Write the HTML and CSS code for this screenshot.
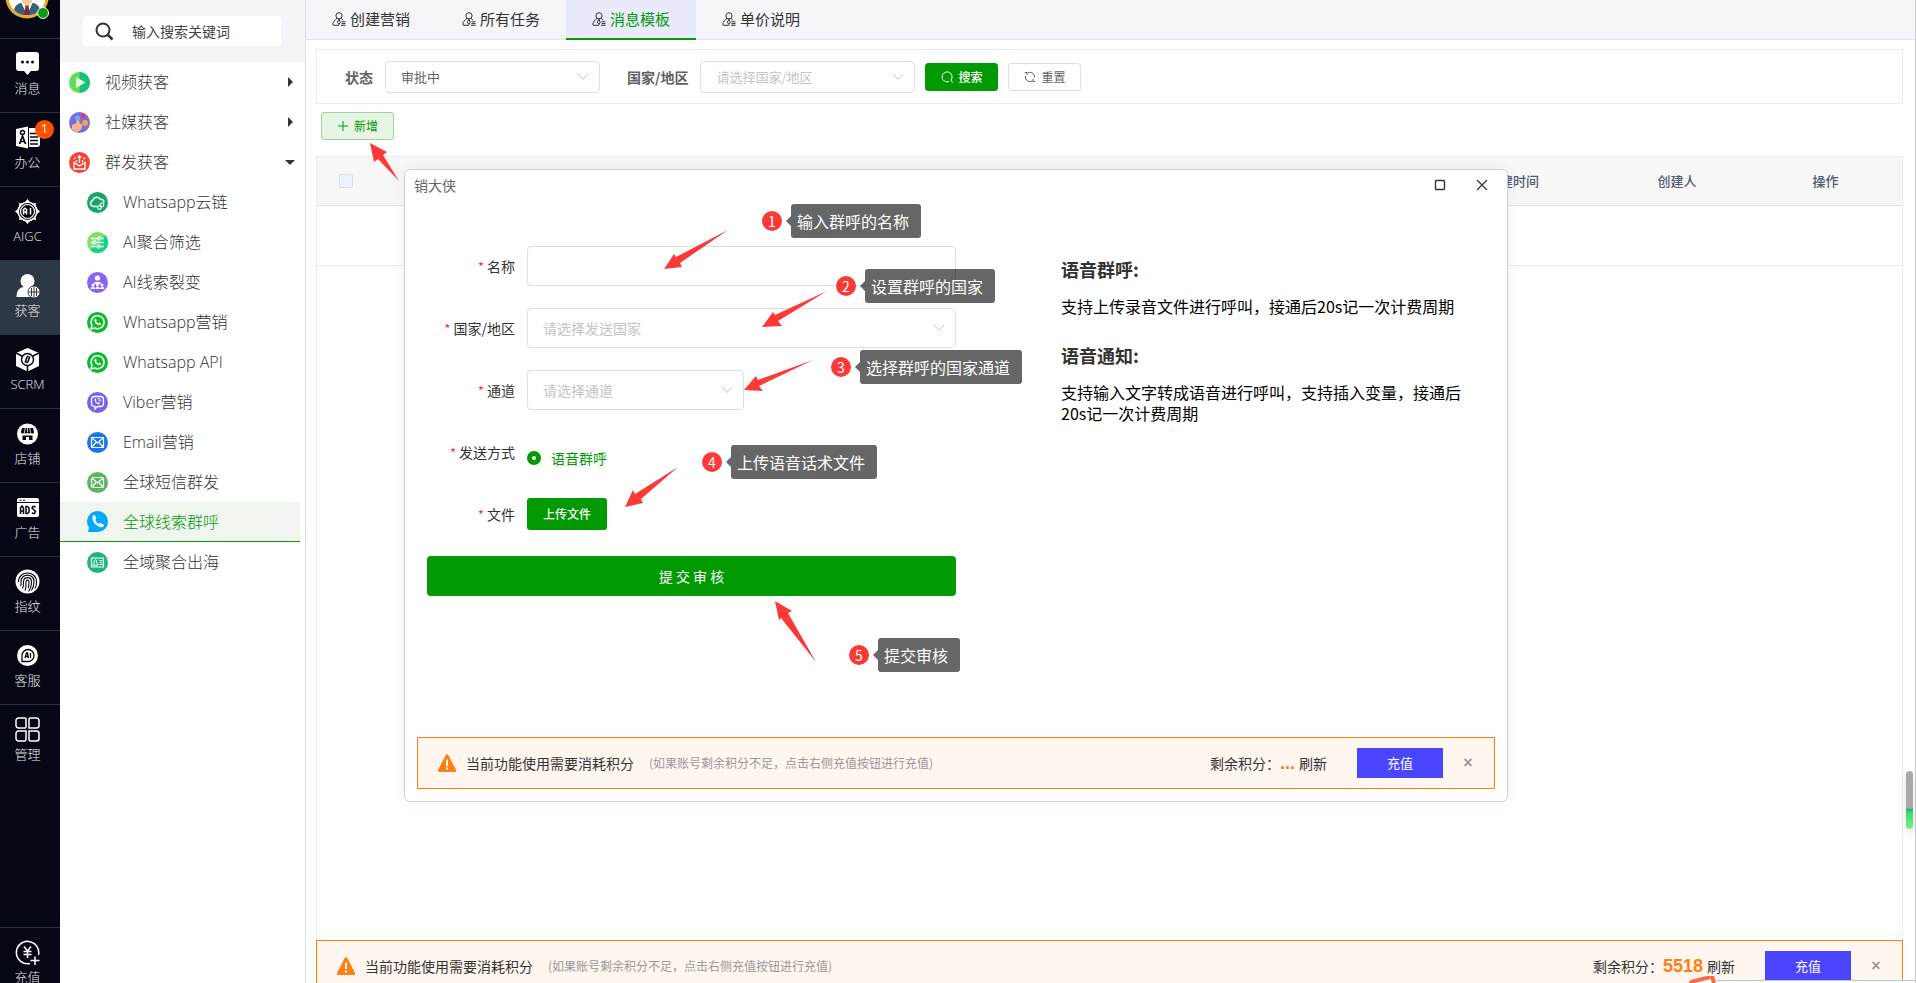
FILE: index.html
```html
<!DOCTYPE html>
<html lang="zh-CN">
<head>
<meta charset="utf-8">
<title>销大侠</title>
<link rel="stylesheet" href="styles.css">
</head>
<body>
<svg class="defs" aria-hidden="true">
  <symbol id="i-tab" viewBox="0 0 14 14"><g fill="none" stroke="currentColor" stroke-width="1"><circle cx="7" cy="3.8" r="3.1"/><path d="M5 6.3C3 7.8 1.2 9.6.8 12.2c-.1.8.3 1.1 1 1.1h5M9 6.3c.9.6 1.6 1.2 2.2 2"/><path d="M7 7l-1.6 3.2L7 12.6l1.2-2.4L7 7M9.5 9.8h4M9.5 11.6h4M9 13.3h4.5"/></g></symbol>
  <symbol id="i-chev" viewBox="0 0 12 8"><path d="M1 1l5 5.4L11 1" fill="none" stroke="currentColor" stroke-width="1"/></symbol>
  <symbol id="i-wa" viewBox="0 0 21 21"><circle cx="10.500" cy="10.500" r="10.500" fill="#0bbd2c"/><path d="M4 17l1-3.4A6.5 6.5 0 1 1 7.6 16z" fill="none" stroke="#fff" stroke-width="1.5"/><path d="M8.1 7c.4-.4.8-.3 1 .1l.5 1.2-.5.9c.5 1.1 1.3 1.8 2.4 2.2l.8-.8 1.6.8c.2.8-.5 1.6-1.4 1.7-2.8 0-5.600-3.100-5.100-5.200z" fill="#fff"/></symbol>
  <symbol id="i-warn" viewBox="0 0 18 18"><path d="M7.700 1a1.500 1.500 0 0 1 2.600 0l7.500 14.500A1.600 1.600 0 0 1 16.500 18h-15A1.600 1.600 0 0 1 .2 15.500z" fill="#ff8011"/><path d="M9 5.500v6.500M9 13.600v2" stroke="#fff" stroke-width="2"/></symbol>
</svg>

<div class="app">
  <nav class="rail" aria-label="主导航">
    <div class="rail-top">
      <div class="avatar">
        <svg viewBox="0 0 44 44" width="44" height="44"><circle cx="22" cy="22" r="21.500" fill="#e8ab2c"/><circle cx="22" cy="22" r="18.500" fill="#fff"/><path d="M9 35c1-6 7-8 13-8s12 2 13 8c-6 7-20 7-26 0z" fill="#34617b"/><path d="M16 27h12l-6 13z" fill="#fff"/><path d="M20.500 30h3l1.200 10h-5.400z" fill="#8c2434"/><path d="M17 22h10v5l-5 4-5-4z" fill="#f6c79b"/></svg>
        <span class="online"></span>
      </div>
    </div>
    <a class="rail-item" href="#"><svg viewBox="0 0 25 25"><path d="M4 1h17a3 3 0 0 1 3 3v13a3 3 0 0 1-3 3h-5l-3.500 4L9 20H4a3 3 0 0 1-3-3V4a3 3 0 0 1 3-3z" fill="#fff"/><g fill="#050714"><circle cx="7.500" cy="11" r="1.500"/><circle cx="12.500" cy="11" r="1.500"/><circle cx="17.500" cy="11" r="1.500"/></g></svg><span>消息</span></a>
    <a class="rail-item" href="#"><svg viewBox="0 0 25 25"><path d="M1 4l12-2.500v22L1 21z" fill="#fff"/><path d="M14 3h8a3 3 0 0 1 3 3v13a3 3 0 0 1-3 3h-8z" fill="#fff"/><path d="M15 8.500h8M15 12h8M15 15.500h8M15 19h8" stroke="#050714" stroke-width="1.500"/><circle cx="7.500" cy="7.500" r="2" fill="none" stroke="#050714" stroke-width="1.500"/><path d="M4.500 19l3-8 3 8M5.500 16.500h4" fill="none" stroke="#050714" stroke-width="1.700"/></svg><span>办公</span><b class="badge">1</b></a>
    <a class="rail-item" href="#"><svg viewBox="0 0 25 25"><circle cx="12.500" cy="12.500" r="9.300" fill="none" stroke="#fff" stroke-width="1.600"/><circle cx="12.500" cy="12.500" r="7" fill="none" stroke="#fff" stroke-width="1.200"/><path d="M12.500 0l2.500 3h-5zM12.500 25l2.500-3h-5zM0 12.500l3-2.500v5zM25 12.500l-3-2.500v5zM4 4l3.500.5-3 3zM21 4l-3.500.5 3 3zM4 21l3.500-.5-3-3zM21 21l-3.500-.5 3-3z" fill="#fff"/><path d="M8.500 15.500v-5l1.500-1.300 1.500 1.300v5M8.500 13h3M15.500 9v6.500" fill="none" stroke="#fff" stroke-width="1.500"/></svg><span>AIGC</span></a>
    <a class="rail-item on" href="#"><svg viewBox="0 0 25 25"><circle cx="12.500" cy="8" r="7" fill="#fff"/><path d="M1.500 24c0-6 2.500-9 6.500-10h7v10z" fill="#fff"/><circle cx="19" cy="19" r="6" fill="#fff" stroke="#2c3845" stroke-width="1"/><path d="M19 14v10M14 19h10M16.500 15v8M21.500 15v8" stroke="#2c3845" stroke-width="1"/></svg><span>获客</span></a>
    <a class="rail-item" href="#"><svg viewBox="0 0 25 25"><path d="M12.500 1L24 6v13l-11.500 5.500L1 19V6z" fill="#fff"/><circle cx="12.500" cy="12.500" r="6" fill="#fff" stroke="#050714" stroke-width="1.500"/><path d="M1 6l6 3M24 6l-6 3M12.500 18.500V25M13.500 9c-3 1-1.500 4-3.500 6.500M15 9.500c-2 2.500-.5 5-3.500 6.500" fill="none" stroke="#050714" stroke-width="1.600"/></svg><span>SCRM</span></a>
    <a class="rail-item" href="#"><svg viewBox="0 0 25 25"><circle cx="12.500" cy="13" r="10.500" fill="#fff"/><path d="M7 7h11l1 4c0 2-3 2-3.300 0-.3 2-3 2-3.200 0-.2 2-3 2-3.200 0-.3 2-3.300 2-3.300 0zM7.500 14.500h10V19h-3.500v-3h-3v3H7.500z" fill="#050714"/><path d="M10.300 7l-.8 4.500M14.700 7l.8 4.500M12.500 7v4" stroke="#fff" stroke-width=".8"/></svg><span>店铺</span></a>
    <a class="rail-item" href="#"><svg viewBox="0 0 25 25"><rect x="2" y="3" width="22" height="19" rx="2" fill="#fff"/><path d="M2 7.500h22M4.500 5.300h2M8 5.300h2" stroke="#050714" stroke-width="1"/><path d="M5.500 19v-6l1.500-2 1.500 2v6M5.500 16h3M11 11.500v7h1.500l1.500-1.500v-4l-1.500-1.500zM20.500 12.500l-1-1H18l-1 1.500 3.500 3.500-1 2H18l-1-1" fill="none" stroke="#050714" stroke-width="1.500"/></svg><span>广告</span></a>
    <a class="rail-item" href="#"><svg viewBox="0 0 25 25"><circle cx="12.500" cy="12.500" r="12" fill="#fff"/><g fill="none" stroke="#050714" stroke-width="1.100"><path d="M3.500 13c0-12 18-12 18 0 0 3-.5 5-1.500 6.500M5.500 17c1-1.500.5-3 .5-4.500 0-8.500 13-8.500 13 0 0 4-.8 6.500-2.500 9M7.500 19.500c1.500-3 .8-5 1-7 .5-5.300 8-5.300 8 .5 0 3.500-1 7-3 9.500M10 21.500c1.500-3 .8-6 1-8.500.2-2.500 3-2.500 3 0 0 3 0 4-.8 6"/></g></svg><span>指纹</span></a>
    <a class="rail-item" href="#"><svg viewBox="0 0 25 25"><circle cx="12.500" cy="12.500" r="10.500" fill="#fff"/><path d="M7 18.500v-6a6 6 0 1 1 6 6z" fill="none" stroke="#050714" stroke-width="1.300"/><path d="M10 15l1.500-5h1l1 5M10.500 13.500h2.500M15.500 10v5" fill="none" stroke="#050714" stroke-width="1.300"/></svg><span>客服</span></a>
    <a class="rail-item last" href="#"><svg viewBox="0 0 25 25"><g fill="none" stroke="#fff" stroke-width="1.500"><path d="M3.500 1H10a1 1 0 0 1 1 1v8a1 1 0 0 1-1 1H3.500A2.500 2.500 0 0 1 1 8.500v-5A2.500 2.500 0 0 1 3.500 1zM15 1h6.500A2.500 2.500 0 0 1 24 3.500v5a2.500 2.500 0 0 1-2.500 2.500H14V2a1 1 0 0 1 1-1zM3.500 14H11v8.500a1.500 1.500 0 0 1-1.500 1.500h-6A2.500 2.500 0 0 1 1 21.500v-5A2.500 2.500 0 0 1 3.500 14zM14 14h7.500a2.500 2.500 0 0 1 2.500 2.500v5a2.500 2.500 0 0 1-2.500 2.500h-6a1.500 1.500 0 0 1-1.500-1.500z"/></g></svg><span>管理</span></a>
    <a class="rail-item foot" href="#"><svg viewBox="0 0 25 25"><g fill="none" stroke="#fff" stroke-width="1.500"><path d="M15 23.500A11.200 11.200 0 1 1 23.500 15M20 16.500V25M15.500 20.500h9"/><path d="M9 6.500l3.500 4.500L16 6.500M8.500 11.500h8M8.500 14.500h8M12.500 11v7"/></g></svg><span>充值</span></a>
  </nav>

  <aside class="side">
    <div class="search-wrap">
      <label class="search"><svg viewBox="0 0 19 19" width="19" height="19"><circle cx="8" cy="8" r="6.500" fill="none" stroke="#333" stroke-width="2"/><path d="M12.500 12.500l5 5" stroke="#333" stroke-width="2.500"/></svg><input type="text" aria-label="搜索" placeholder="输入搜索关键词"></label>
    </div>
    <ul class="menu">
      <li><a href="#"><svg class="mi" viewBox="0 0 21 21"><circle cx="10.500" cy="10.500" r="10.500" fill="#63dd55"/><path d="M10.500 0a10.500 10.500 0 0 1 0 21z" fill="#17c37b"/><path d="M7 5v11l9.500-5.500z" fill="#e4f6e6"/></svg><span>视频获客</span><i class="caret"></i></a></li>
      <li><a href="#"><svg class="mi" viewBox="0 0 21 21"><circle cx="10.500" cy="10.500" r="10.500" fill="#8069dd"/><path d="M3 13l4.500-2V5.500l2 .2 1 5.300 3 2-1.500 4.500L9 20c-3-.5-5-2-6-3z" fill="#f8b68c"/><circle cx="8.500" cy="6" r="2.500" fill="#54b6f5"/><path d="M12 2h4v4h-4z" fill="#e33b52"/><circle cx="16" cy="11" r="3" fill="#f0a63b"/></svg><span>社媒获客</span><i class="caret"></i></a></li>
      <li><a href="#"><svg class="mi" viewBox="0 0 21 21"><circle cx="10.500" cy="10.500" r="10.500" fill="#f44336"/><path d="M5 9.500V17h11V9.500M5.500 10.500l5 3.500 5-3.500M7.500 10V8M13.500 10V8M10.500 11V4M8.800 5.500l1.700-1.700 1.700 1.700M5 7l1.500-1.500M16 7l-1.500-1.500" fill="none" stroke="#fff" stroke-width="1.300"/></svg><span>群发获客</span><i class="caret down"></i></a></li>
      <li class="sub"><a href="#"><svg class="mi" viewBox="0 0 21 21"><circle cx="10.500" cy="10.500" r="10.500" fill="#14a768"/><path d="M10 14.500H6.500a3.200 3.200 0 0 1-.5-6.300c.8-3.500 5.800-4.200 7.300-.9 2.200-.1 3.600 1.400 3.700 3.200" fill="none" stroke="#fff" stroke-width="1.500"/><g fill="none" stroke="#fff" stroke-width="1.200"><circle cx="15" cy="12.800" r="1.800"/><circle cx="12.500" cy="15.500" r="1.800"/></g></svg><span>Whatsapp云链</span></a></li>
      <li class="sub"><a href="#"><svg class="mi" viewBox="0 0 21 21"><circle cx="10.500" cy="10.500" r="10.500" fill="#7de267"/><path d="M18 3a10.500 10.500 0 0 1-15 15z" fill="#0ad97e"/><g stroke="#fff" stroke-width="1.300" fill="#3edb77"><path d="M4 6.500h13M4 10.500h13M4 14.500h13"/><circle cx="12.500" cy="6.500" r="1.500"/><circle cx="7.500" cy="10.500" r="1.500"/><circle cx="11.500" cy="14.500" r="1.500"/></g></svg><span>AI聚合筛选</span></a></li>
      <li class="sub"><a href="#"><svg class="mi" viewBox="0 0 21 21"><circle cx="10.500" cy="10.500" r="10.500" fill="#8763f6"/><g fill="#fff"><circle cx="10.500" cy="6" r="2.600"/><path d="M8 10h5l1.500 2h-8z"/><circle cx="6" cy="13" r="1.500"/><circle cx="10.500" cy="13" r="1.500"/><circle cx="15" cy="13" r="1.500"/><path d="M3.500 17c0-3 4.500-3 4.500 0zM8.300 17c0-3 4.500-3 4.500 0zM13 17c0-3 4.500-3 4.500 0z"/></g></svg><span>AI线索裂变</span></a></li>
      <li class="sub"><a href="#"><svg class="mi"><use href="#i-wa"/></svg><span>Whatsapp营销</span></a></li>
      <li class="sub"><a href="#"><svg class="mi"><use href="#i-wa"/></svg><span>Whatsapp API</span></a></li>
      <li class="sub"><a href="#"><svg class="mi" viewBox="0 0 21 21"><circle cx="10.500" cy="10.500" r="10.500" fill="#7b60ef"/><path d="M7.500 4.500h6c2 0 3 1 3 3v4c0 2-1 3-3 3h-3L8 17v-2.500c-2.500 0-3.500-1-3.500-3v-4c0-2 1-3 3-3z" fill="none" stroke="#fff" stroke-width="1.300"/><path d="M7.700 7c1-1 1.300.2 1.500 1-.8 1 .8 2.800 2 2.800 1-.7 1.700.3 1.700 1-1 1.500-5.700-1-5.200-4.800z" fill="#fff"/><path d="M11 6.500c1.800 0 2.800 1.200 2.800 3M11 8c.8 0 1.200.5 1.200 1.200" fill="none" stroke="#fff" stroke-width=".9"/></svg><span>Viber营销</span></a></li>
      <li class="sub"><a href="#"><svg class="mi" viewBox="0 0 21 21"><circle cx="10.500" cy="10.500" r="10.500" fill="#1a76f0"/><path d="M4.500 5.500h12v10h-12zM4.500 5.500l6 5.500 6-5.500M4.500 15.500l4.500-5M16.500 15.500l-4.500-5" fill="none" stroke="#fff" stroke-width="1.200"/></svg><span>Email营销</span></a></li>
      <li class="sub"><a href="#"><svg class="mi" viewBox="0 0 21 21"><circle cx="10.500" cy="10.500" r="10.500" fill="#5cb860"/><path d="M6.500 5.500h8a2 2 0 0 1 2 2v6a2 2 0 0 1-2 2h-8a2 2 0 0 1-2-2v-6a2 2 0 0 1 2-2zM5 6l5.500 5L16 6M5 15l4-4.500M16 15l-4-4.500" fill="none" stroke="#fff" stroke-width="1.200"/></svg><span>全球短信群发</span></a></li>
      <li class="sub on"><a href="#"><svg class="mi" viewBox="0 0 21 21"><path d="M10.500 0a10.500 10.500 0 1 1 0 21H1l1-4.500A10.500 10.500 0 0 1 10.500 0z" fill="#00a8fb"/><path d="M6 4.500l1.500-.7 2 3.500-1.300 1.500c.5 1.800 2 3.300 3.800 4.200l1.500-1.300 3.500 2.300-.7 1.700C12 18.500 3 10 6 4.500z" fill="#fff"/></svg><span>全球线索群呼</span></a></li>
      <li class="sub"><a href="#"><svg class="mi" viewBox="0 0 21 21"><circle cx="10.500" cy="10.500" r="10.500" fill="#1db57c"/><path d="M4.500 6h12v9h-12z" fill="none" stroke="#fff" stroke-width="1.200"/><path d="M6 13.200h5c0-2-1.300-2-1.700-2.400.9-.8.800-3-.8-3s-1.700 2.200-.8 3C7.300 11.200 6 11.200 6 13.200zM12.500 8.500h3M12.500 10.500h3M12.500 12.500h3" fill="none" stroke="#fff" stroke-width="1"/></svg><span>全域聚合出海</span></a></li>
    </ul>
  </aside>

  <main class="main">
    <div class="tabs" role="tablist">
      <button role="tab"><svg width="14" height="14"><use href="#i-tab"/></svg>创建营销</button>
      <button role="tab"><svg width="14" height="14"><use href="#i-tab"/></svg>所有任务</button>
      <button role="tab" class="on" aria-selected="true"><svg width="14" height="14"><use href="#i-tab"/></svg>消息模板</button>
      <button role="tab"><svg width="14" height="14"><use href="#i-tab"/></svg>单价说明</button>
    </div>

    <div class="page">
      <form class="filter">
        <label for="f-state">状态</label>
        <div class="sel"><select id="f-state"><option>审批中</option></select><svg class="chev"><use href="#i-chev"/></svg></div>
        <label class="l2" for="f-area">国家/地区</label>
        <div class="sel"><select id="f-area" class="ph"><option>请选择国家/地区</option></select><svg class="chev"><use href="#i-chev"/></svg></div>
        <button type="button" class="btn solid"><svg viewBox="0 0 12 12" width="12" height="12"><path d="M8 10.500A5 5 0 1 1 10 9l1.500 2.500" fill="none" stroke="currentColor"/></svg>搜索</button>
        <button type="button" class="btn"><svg viewBox="0 0 12 12" width="12" height="12"><path d="M3.500 2A4.700 4.700 0 0 1 10.500 5v1.500M1.500 5v2a4.700 4.700 0 0 0 7 3M3 4V1.500H.8M9 8v2.500h2.200" fill="none" stroke="currentColor"/></svg>重置</button>
      </form>

      <div class="tools"><button type="button" class="btn light"><svg viewBox="0 0 12 12" width="12" height="12"><path d="M6 1v10M1 6h10" stroke="currentColor"/></svg>新增</button></div>

      <div class="table-box">
        <table>
          <colgroup><col class="c-check"><col><col class="c-time"><col class="c-user"><col class="c-act"></colgroup>
          <thead><tr><th><input type="checkbox" aria-label="全选"></th><th></th><th>创建时间</th><th>创建人</th><th>操作</th></tr></thead>
          <tbody><tr><td colspan="5"></td></tr></tbody>
        </table>
      </div>

      <div class="notice">
        <svg class="warn"><use href="#i-warn"/></svg><strong>当前功能使用需要消耗积分</strong><small>(如果账号剩余积分不足，点击右侧充值按钮进行充值)</small>
        <span class="points">剩余积分：<b>5518</b><a href="#">刷新</a></span><button type="button" class="pay">充值</button><button type="button" class="x" aria-label="关闭">×</button>
      </div>
    </div>
    <div class="thumb"></div>
    <div class="peek"><i></i></div>
  </main>
</div>

<section class="dialog" role="dialog" aria-label="销大侠">
  <header class="dlg-head"><span>销大侠</span>
    <button type="button" aria-label="最大化"><svg viewBox="0 0 12 12" width="12" height="12"><rect x="1.500" y="1.500" width="9" height="9" rx="1" fill="none" stroke="#333" stroke-width="1.400"/></svg></button>
    <button type="button" aria-label="关闭"><svg viewBox="0 0 12 12" width="12" height="12"><path d="M1 1l10 10M11 1L1 11" stroke="#333" stroke-width="1.200"/></svg></button>
  </header>
  <div class="dlg-body">
    <form class="form">
      <div class="row"><label for="n">名称</label><input id="n" type="text" class="txt"></div>
      <div class="row"><label for="c">国家/地区</label><div class="sel big"><select id="c" class="ph"><option>请选择发送国家</option></select><svg class="chev"><use href="#i-chev"/></svg></div></div>
      <div class="row"><label for="w">通道</label><div class="sel big short"><select id="w" class="ph"><option>请选择通道</option></select><svg class="chev"><use href="#i-chev"/></svg></div></div>
      <div class="row"><label for="m">发送方式</label><div class="radio"><input type="radio" id="m" name="mode" checked><label for="m">语音群呼</label></div></div>
      <div class="row"><label for="u">文件</label><button id="u" type="button" class="upload">上传文件</button></div>
      <button type="button" class="submit">提 交 审 核</button>
    </form>
    <div class="help">
      <h3>语音群呼:</h3>
      <p>支持上传录音文件进行呼叫，接通后20s记一次计费周期</p>
      <h3>语音通知:</h3>
      <p>支持输入文字转成语音进行呼叫，支持插入变量，接通后20s记一次计费周期</p>
    </div>
  </div>
  <div class="notice">
    <svg class="warn"><use href="#i-warn"/></svg><strong>当前功能使用需要消耗积分</strong><small>(如果账号剩余积分不足，点击右侧充值按钮进行充值)</small>
    <span class="points">剩余积分：<b>...</b><a href="#">刷新</a></span><button type="button" class="pay">充值</button><button type="button" class="x" aria-label="关闭">×</button>
  </div>
</section>

<svg class="arrows" width="1000" height="700" fill="#fb3a38" aria-hidden="true">
  <polygon points="370,143 387,152 383,155 399,181 378,159 374,162"/>
  <polygon points="664,269 674,254 676,257 728,230 680,263 682,267"/>
  <polygon points="762,327 773,312 775,315 827,291 778,321 782,326"/>
  <polygon points="744,390 756,376 758,380 813,360 759,386 763,391"/>
  <polygon points="625,507 633,490 635,494 678,467 641,499 643,503"/>
  <polygon points="775,601 792,611 788,613 816,662 781,618 779,620"/>
</svg>
<div class="tip t1"><i>1</i><span>输入群呼的名称</span></div>
<div class="tip t2"><i>2</i><span>设置群呼的国家</span></div>
<div class="tip t3"><i>3</i><span>选择群呼的国家通道</span></div>
<div class="tip t4"><i>4</i><span>上传语音话术文件</span></div>
<div class="tip t5"><i>5</i><span>提交审核</span></div>
</body>
</html>
```

FILE: styles.css
```css
* { box-sizing: border-box; }
body {
  margin: 0;
  height: 100vh;
  overflow: hidden;
  position: relative;
  background: #fff;
  color: #333;
  font: 14px/20px "Noto Sans CJK SC", sans-serif;
}
button, input, select { font: inherit; color: inherit; margin: 0; }
button { border: 0; background: none; padding: 0; cursor: pointer; }
a { color: inherit; text-decoration: none; }
ul { list-style: none; margin: 0; padding: 0; }
.defs { position: absolute; width: 0; height: 0; }

/* The shell runs slightly past the bottom of the window */
.app {
  display: grid;
  grid-template-columns: 60px 246px minmax(0, 1fr);
  height: calc(100vh + 18px);
}

/* Left rail */
.rail { display: flex; flex-direction: column; background: #050714; overflow: hidden; }
.rail-top {
  display: flex;
  flex: none;
  align-items: flex-end;
  height: 39px;
  padding: 0 0 19px 5px;
  border-bottom: 1px solid #26333d;
}
.avatar { position: relative; height: 44px; }
.online {
  position: absolute;
  right: 0;
  bottom: 0;
  width: 12px;
  height: 12px;
  border: 1px solid #fff;
  border-radius: 50%;
  background: #0a9a0a;
}
.rail-item {
  position: relative;
  display: flex;
  flex: none;
  flex-direction: column;
  align-items: center;
  gap: 2px;
  height: 74px;
  padding: 12px 5px 0 0;
  border-bottom: 1px solid #26333d;
  color: #e4e6ea;
  font: 300 13px/20px "Open Sans", "Noto Sans CJK SC", sans-serif;
}
.rail-item svg { width: 25px; height: 25px; flex: none; }
.rail-item.on { background: #2c3845; border-color: #2c3845; }
.rail-item.last { border: 0; }
.rail-item.foot { margin-top: auto; border-bottom: 0; border-top: 1px solid #26333d; }
.badge {
  position: absolute;
  left: 35px;
  top: 7px;
  width: 19px;
  height: 19px;
  border-radius: 50%;
  background: #ff5000;
  color: #fff;
  font-weight: 400;
  font-size: 12px;
  line-height: 18px;
  text-align: center;
}

/* Side menu */
.side { border-right: 1px solid #dcdfe6; }
.search-wrap { padding: 16px 24px 16px 23px; background: #f4f4f9; }
.search {
  display: flex;
  align-items: center;
  gap: 16px;
  height: 30px;
  padding: 0 12px;
  border-radius: 4px;
  background: #fff;
}
.search svg { flex: none; }
.search input {
  width: 100%;
  min-width: 0;
  border: 0;
  outline: 0;
  background: none;
  font-size: 14px;
}
.search input::placeholder { color: #444; }
.menu { font: 300 16px/24px "Open Sans", "Noto Sans CJK SC", sans-serif; }
.menu li { padding-right: 5px; }
.menu a {
  display: flex;
  align-items: center;
  gap: 15px;
  height: 40px;
  padding: 0 7px 0 9px;
  color: #333;
}
.menu .mi { width: 21px; height: 21px; flex: none; }
.menu .sub a { padding-left: 27px; }
.menu .on a { background: #f0f5f0; border-bottom: 1px solid #079807; color: #079807; }
.caret {
  width: 0;
  height: 0;
  margin-left: auto;
  border: 5px solid transparent;
  border-left-color: #333;
  border-right-width: 0;
}
.caret.down { border: 5px solid transparent; border-top-color: #333; border-bottom-width: 0; margin-right: -2px; }

/* Main column */
.main { display: flex; flex-direction: column; position: relative; border-right: 1px solid #ccc; }
.tabs { display: flex; flex: none; height: 40px; background: #f5f5fa; border-bottom: 1px solid #e2e3e8; }
.tabs button {
  display: flex;
  align-items: center;
  justify-content: center;
  gap: 4px;
  width: 130px;
  height: 40px;
  border-bottom: 2px solid transparent;
  font-size: 15px;
}
.tabs svg { color: #333; }
.tabs .on { background: #e9ebfd; border-color: #079807; color: #079807; }
.page { display: flex; flex: 1; flex-direction: column; padding: 9px 12px 9px 10px; }

.filter {
  display: flex;
  align-items: center;
  gap: 10px;
  height: 55px;
  padding-left: 28px;
  border: 1px solid #ebeef0;
}
.filter > label { font-weight: 700; color: #606266; padding-right: 2px; }
.filter .l2 { padding-left: 17px; }
.sel { position: relative; width: 215px; height: 32px; }
.sel select, .txt {
  width: 100%;
  height: 100%;
  appearance: none;
  padding: 0 15px;
  border: 1px solid #dcdfe6;
  border-radius: 4px;
  background: #fff;
  color: #606266;
  font-size: 13px;
  outline: 0;
}
.sel .ph { color: #c0c4cc; }
.chev { position: absolute; right: 11px; top: 50%; width: 12px; height: 8px; margin-top: -4px; color: #c0c4cc; }
.btn {
  display: flex;
  align-items: center;
  justify-content: center;
  gap: 5px;
  width: 73px;
  height: 28px;
  border: 1px solid #dcdfe6;
  border-radius: 3px;
  color: #606266;
  font-size: 12px;
}
.btn.solid { background: #029a02; border-color: #029a02; color: #fff; font-weight: 500; }
.btn.light { background: #e6f5e6; border-color: #99d699; color: #029a02; }
.tools { padding: 8px 5px 16px; }

.table-box { flex: 1; border: 1px solid #ebeef0; border-bottom: 0; }
table { width: 100%; border-collapse: collapse; table-layout: fixed; }
.c-check { width: 57px; }
.c-time { width: 184px; }
.c-user { width: 144px; }
.c-act { width: 153px; }
th {
  height: 48px;
  padding: 0;
  background: #f7f7f7;
  border-bottom: 1px solid #dfe6ec;
  color: #515a6e;
  font-size: 13px;
  font-weight: 500;
}
td { height: 60px; padding: 0; border-bottom: 1px solid #e6ebf5; }
th input {
  appearance: none;
  display: block;
  width: 14px;
  height: 14px;
  margin: auto;
  border: 1px solid #dcdfe6;
  border-radius: 2px;
  background: #edf2fc;
}

/* Points notice */
.notice {
  display: flex;
  flex: none;
  align-items: center;
  height: 52px;
  padding: 0 20px;
  border: 1px solid #ff8011;
  background: #fff6f0;
  white-space: nowrap;
}
.warn { width: 18px; height: 18px; flex: none; margin-right: 10px; }
.notice strong { font-weight: 400; }
.notice small { margin-left: 15px; color: #999; font-size: 12px; }
.points { display: flex; align-items: center; margin-left: auto; }
.points b { margin-right: 4px; color: #ff8011; font: 700 18px/20px "Liberation Sans", sans-serif; }
.pay { width: 86px; height: 30px; margin-left: 30px; background: #4a45ff; color: #fff; font-size: 13px; }
.x { width: 12px; margin-left: 19px; color: #999; font: 700 16px/20px "Liberation Sans", sans-serif; }

.thumb {
  position: absolute;
  right: 2px;
  top: 771px;
  width: 7px;
  height: 58px;
  border-radius: 4px;
  background: linear-gradient(#aaa 64%, #1fb866 66%, #3ddb6f 72%, #7cf08a);
  box-shadow: 0 4px 8px #0002;
}
.peek {
  position: absolute;
  right: 0;
  bottom: 18px;
  width: 226px;
  height: 7px;
  overflow: hidden;
}
.peek::before { content: ""; position: absolute; left: 27px; right: 0; top: 4px; bottom: 0; border-top: 1px solid #b4cbe6; background: #fff; }
.peek i { position: absolute; left: 2px; top: 1px; width: 26px; height: 24px; border: 4px solid #fb6c40; border-radius: 3px; background: #fff; transform: rotate(-14deg); }

/* Dialog window */
.dialog {
  position: absolute;
  left: 404px;
  right: 408px;
  top: 169px;
  padding: 0 12px 12px;
  border: 1px solid #d2d2d2;
  border-radius: 6px;
  background: #fff;
  box-shadow: 0 0 14px #0000000f;
}
.dlg-head { display: flex; align-items: center; gap: 30px; height: 30px; padding-right: 7px; color: #666; }
.dlg-head span { flex: 1; margin-left: -3px; line-height: 18px; }
.dlg-head button { display: flex; }
.dlg-body { display: flex; gap: 105px; padding: 46px 33px 141px 10px; }
.form { display: flex; flex: none; flex-direction: column; gap: 22px; width: 529px; }
.row { display: flex; align-items: center; gap: 12px; height: 40px; }
.row > label { width: 88px; text-align: right; color: #333; }
.row > label::before { content: "* "; color: #f33; font-size: 13px; }
.txt, .row .big { flex: 1; height: 40px; }
.row .short { flex: none; width: 217px; }
.big select { font-size: 14px; }
.radio { display: flex; align-items: center; gap: 10px; padding-top: 12px; color: #029a02; }
.radio input {
  appearance: none;
  width: 14px;
  height: 14px;
  border: 5px solid #029a02;
  border-radius: 50%;
  background: #fff;
}
.upload { width: 80px; height: 32px; border-radius: 3px; background: #029a02; color: #fff; font-size: 12px; font-weight: 500; }
.submit { height: 40px; border-radius: 4px; background: #029a02; color: #fff; }
.help { color: #000; font-size: 16px; line-height: 21px; padding-top: 13px; }
.help h3 { margin: 0 0 16px; font-size: 18px; line-height: 21px; color: #333; }
.help p { margin: 0 0 28px; }
.help p:last-child { margin: 0; }

/* Guide marks laid over the window */
.arrows { position: absolute; left: 0; top: 0; pointer-events: none; }
.tip { position: absolute; display: flex; align-items: center; gap: 9px; color: #fff; }
.tip i {
  width: 20px;
  height: 20px;
  border-radius: 50%;
  background: #fb3a38;
  font-style: normal;
  font-size: 14px;
  text-align: center;
}
.tip span {
  position: relative;
  padding: 5px 12px 5px 6px;
  border-radius: 3px;
  background: #0009;
  font-size: 16px;
  line-height: 24px;
}
.tip span::before {
  content: "";
  position: absolute;
  left: -5px;
  top: 12px;
  border: 5px solid transparent;
  border-left: 0;
  border-right-color: #0009;
}
.t1 { left: 762px; top: 204px; }
.t2 { left: 836px; top: 269px; }
.t3 { left: 831px; top: 350px; }
.t4 { left: 702px; top: 445px; }
.t5 { left: 849px; top: 638px; }
```
